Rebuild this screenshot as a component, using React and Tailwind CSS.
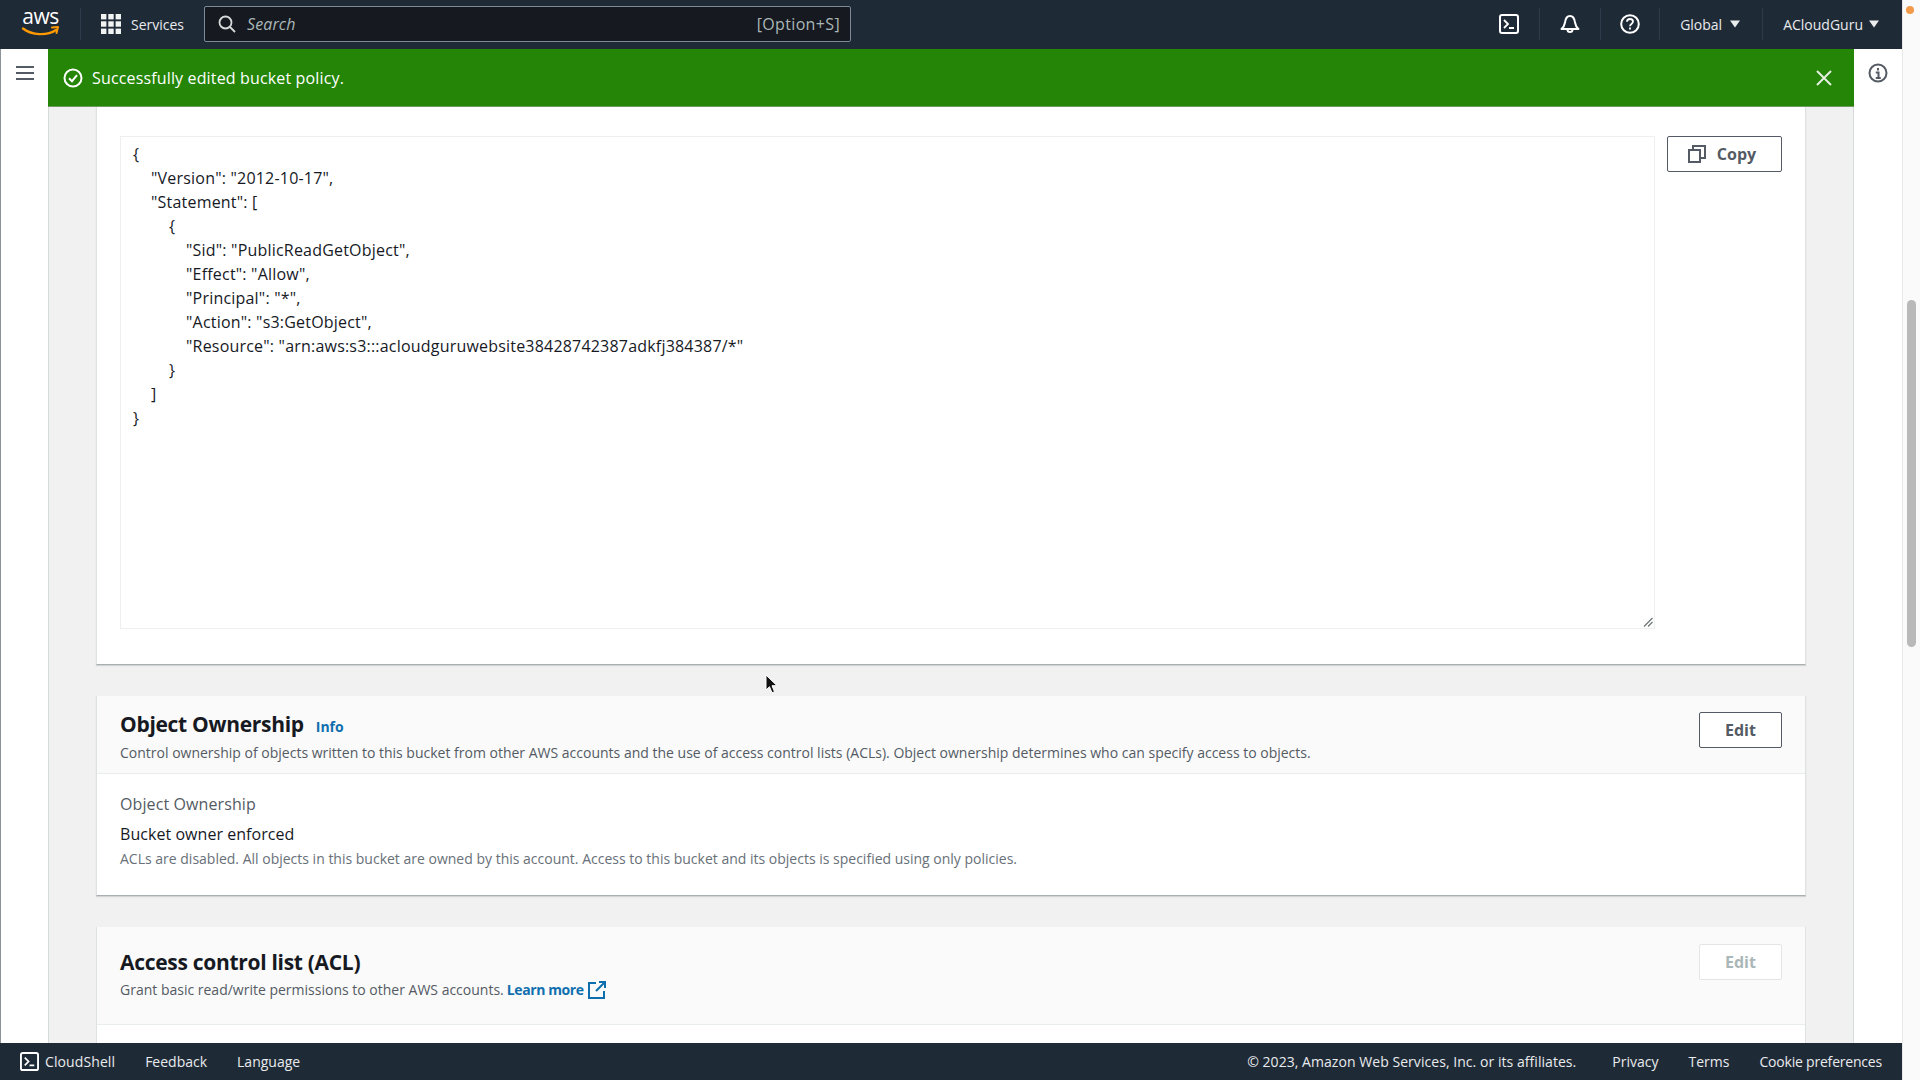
import React from "react";

const lines = [
  { t: "{", c: "pl-0" },
  { t: '"Version": "2012-10-17",', c: "pl-[18px]" },
  { t: '"Statement": [', c: "pl-[18px]" },
  { t: "{", c: "pl-[36px]" },
  { t: '"Sid": "PublicReadGetObject",', c: "pl-[53px]" },
  { t: '"Effect": "Allow",', c: "pl-[53px]" },
  { t: '"Principal": "*",', c: "pl-[53px]" },
  { t: '"Action": "s3:GetObject",', c: "pl-[53px]" },
  { t: '"Resource": "arn:aws:s3:::acloudguruwebsite38428742387adkfj384387/*"', c: "pl-[53px]" },
  { t: "}", c: "pl-[36px]" },
  { t: "]", c: "pl-[18px]" },
  { t: "}", c: "pl-0" },
];

const Sep = () => <div className="w-px h-8 bg-[#2f3b4a]" />;

const Caret = () => (
  <svg width="12" height="8" viewBox="0 0 12 8" className="shrink-0">
    <path d="M1 0.5h10L6 7.5z" fill="#e9ebed" />
  </svg>
);

const TerminalIcon = ({ size = 20, className = "" }) => (
  <svg width={size} height={size} viewBox="0 0 20 20" fill="none" stroke="currentColor" strokeWidth="2" className={className}>
    <rect x="1" y="1" width="18" height="18" rx="2" />
    <path d="M5 6l4 4-4 4M10 14h5" strokeWidth="1.8" />
  </svg>
);

export default function App() {
  return (
    <div className="flex h-screen w-screen overflow-hidden bg-white font-['Open_Sans','Noto_Sans',sans-serif] text-[#16191f]">
      <div className="flex flex-col flex-1 min-w-0">
        {/* top bar */}
        <header className="h-[49px] shrink-0 bg-[#1f2a37] flex items-center pb-px text-[#e9ebed] text-[14px]">
          <div className="w-[80px] shrink-0 h-full flex justify-center">
            <div className="relative w-[40px] h-[36px] mt-[5px] ml-[1px]">
              <div className="text-white text-[21px] leading-[22px] text-center tracking-[-0.5px]">aws</div>
              <svg width="40" height="12" viewBox="0 0 40 12" className="absolute left-0 top-[21px]" fill="none">
                <path d="M2 2.5c9 7 24 7.5 33 1.5" stroke="#ff9900" strokeWidth="2.4" strokeLinecap="round" />
                <path d="M31 1.5l6-.5-1.5 6" stroke="#ff9900" strokeWidth="2" strokeLinecap="round" strokeLinejoin="round" />
              </svg>
            </div>
          </div>
          <Sep />
          <svg width="20" height="20" viewBox="0 0 20 20" fill="#f2f3f3" className="ml-[20px] shrink-0">
            <rect x="0" y="0" width="5.4" height="5.4" />
            <rect x="7.3" y="0" width="5.4" height="5.4" />
            <rect x="14.6" y="0" width="5.4" height="5.4" />
            <rect x="0" y="7.3" width="5.4" height="5.4" />
            <rect x="7.3" y="7.3" width="5.4" height="5.4" />
            <rect x="14.6" y="7.3" width="5.4" height="5.4" />
            <rect x="0" y="14.6" width="5.4" height="5.4" />
            <rect x="7.3" y="14.6" width="5.4" height="5.4" />
            <rect x="14.6" y="14.6" width="5.4" height="5.4" />
          </svg>
          <span className="ml-[10px] w-[73px] shrink-0">Services</span>
          <div className="w-[647px] h-9 shrink-0 bg-[#16191f] border border-[#7d8998] rounded-[2px] flex items-center pl-[13px] pr-[10px] text-[16px] text-[#aab7b8]">
            <svg width="18" height="18" viewBox="0 0 18 18" fill="none" stroke="#d5dbdb" strokeWidth="1.8" className="shrink-0">
              <circle cx="7.5" cy="7.5" r="6" />
              <path d="M12 12l5 5" />
            </svg>
            <span className="ml-[11px] italic tracking-[0.1px]">Search</span>
            <span className="ml-auto tracking-[0.35px]">[Option+S]</span>
          </div>
          <div className="flex-1" />
          <TerminalIcon size={20} className="text-white shrink-0 mr-[20px]" />
          <Sep />
          <svg width="20" height="20" viewBox="0 0 20 20" fill="none" stroke="#fff" strokeWidth="2" strokeLinejoin="round" className="mx-[20px] shrink-0">
            <path d="M1.5 15c2.5-2 3-3.5 3.5-6.500C5.500 4.500 7 2 10 2s4.500 2.500 5 6.500c.5 3 1 4.500 3.500 6.500z" />
            <path d="M7.500 15.500a2.500 2.500 0 0 0 5 0" />
          </svg>
          <Sep />
          <svg width="20" height="20" viewBox="0 0 20 20" fill="none" stroke="#fff" strokeWidth="2" className="mx-[19px] shrink-0">
            <circle cx="10" cy="10" r="8.800" />
            <path d="M7 7.800c0-1.800 1.400-2.800 3-2.800s3 1 3 2.600c0 2.400-3 2.400-3 4.600" strokeWidth="1.800" />
            <path d="M10 13.600v1.800" strokeWidth="1.800" />
          </svg>
          <Sep />
          <span className="ml-[20px]">Global</span>
          <span className="ml-[7px] mr-[21px]"><Caret /></span>
          <Sep />
          <span className="ml-[20px]">ACloudGuru</span>
          <span className="ml-[5px] mr-[22px]"><Caret /></span>
        </header>

        {/* middle */}
        <div className="flex-1 flex min-h-0">
          <aside className="w-12 shrink-0 bg-white border-l border-[#8d9499] flex justify-center pt-[16px]">
            <svg width="18" height="16" viewBox="0 0 18 16" stroke="#545b64" strokeWidth="2">
              <path d="M0 2h18M0 8h18M0 14h18" />
            </svg>
          </aside>

          <main className="flex-1 min-w-0 flex flex-col bg-[#f0f1f0] relative border-l border-[#d5dbdb] border-r">
            <div className="h-[58px] shrink-0 -mx-px bg-[#248507] border-b border-[#6f9a63] flex items-center pl-[15px] pr-[22px] text-white text-[16px]">
              <svg width="20" height="20" viewBox="0 0 20 20" fill="none" stroke="#fff" strokeWidth="2" className="shrink-0">
                <circle cx="10" cy="10" r="8.500" />
                <path d="M6 10.200l3 3 5-6" />
              </svg>
              <span className="ml-[9px] tracking-[0.15px]">Successfully edited bucket policy.</span>
              <svg width="16" height="16" viewBox="0 0 16 16" stroke="#e4efe0" strokeWidth="2" className="ml-auto">
                <path d="M1 1l14 14M15 1L1 15" />
              </svg>
            </div>

            <div className="flex-1 min-h-0 overflow-hidden px-[47px] flex flex-col gap-[31px]">
              {/* policy card */}
              <section className="h-[558px] shrink-0 bg-white border-x border-[#dfe2e3] border-b border-b-[#a9aeb0] shadow-[0_1px_1px_rgba(0,0,0,0.12)] pt-[29px] pl-[23px] pr-[23px] flex items-start gap-[12px]">
                <div className="relative w-[1535px] h-[493px] shrink-0 border border-[#eef0f0] pt-[5px] pl-[12px] text-[16px] leading-[24px] tracking-[0.2px] text-[#16191f]">
                  {lines.map((l, i) => (
                    <div key={i} className={l.c}>{l.t}</div>
                  ))}
                  <svg width="10" height="10" viewBox="0 0 10 10" stroke="#6c7378" strokeWidth="1.200" className="absolute right-[1px] bottom-[1px]">
                    <path d="M1 9.500L9.500 1M5 9.500L9.500 5" />
                  </svg>
                </div>
                <button className="w-[115px] h-9 shrink-0 bg-white border border-[#545b64] rounded-[2px] flex items-center justify-center gap-[11px] pr-[5px] text-[#545b64] text-[16px] font-bold">
                  <svg width="18" height="18" viewBox="0 0 18 18" fill="none" stroke="#545b64" strokeWidth="2">
                    <rect x="1" y="5" width="11" height="12" />
                    <path d="M5 4V1h12v12h-4" />
                  </svg>
                  Copy
                </button>
              </section>

              {/* object ownership */}
              <section className="h-[200px] shrink-0 bg-white border-x border-[#dfe2e3] border-b border-b-[#a9aeb0] shadow-[0_1px_1px_rgba(0,0,0,0.12)]">
                <div className="h-[78px] bg-[#fafafa] border-b border-[#eaeded] pl-[23px] pr-[23px] flex">
                  <div className="flex-1 min-w-0 pt-[13px]">
                    <div className="flex items-baseline gap-[12px] h-[31px]">
                      <h2 className="text-[21px] leading-[31px] font-bold tracking-[-0.3px] text-[#16191f]">Object Ownership</h2>
                      <a className="text-[14px] font-bold text-[#0f6fae]">Info</a>
                    </div>
                    <p className="text-[14px] leading-[20px] mt-[3px] text-[#545b64]">
                      Control ownership of objects written to this bucket from other AWS accounts and the use of access control lists (ACLs). Object ownership determines who can specify access to objects.
                    </p>
                  </div>
                  <button className="mt-[16px] w-[83px] h-9 shrink-0 bg-white border border-[#545b64] rounded-[2px] text-[#545b64] text-[16px] font-bold">Edit</button>
                </div>
                <div className="pl-[23px] pt-[18px]">
                  <div className="text-[16px] leading-[24px] tracking-[0.1px] text-[#545b64]">Object Ownership</div>
                  <div className="text-[16px] leading-[24px] mt-[6px] tracking-[0.05px] text-[#16191f]">Bucket owner enforced</div>
                  <div className="text-[14px] leading-[20px] mt-[3px] text-[#687078]">
                    ACLs are disabled. All objects in this bucket are owned by this account. Access to this bucket and its objects is specified using only policies.
                  </div>
                </div>
              </section>

              {/* ACL */}
              <section className="h-[200px] shrink-0 bg-white border-x border-[#dfe2e3]">
                <div className="h-[98px] bg-[#fafafa] border-b border-[#eaeded] pl-[23px] pr-[23px] flex">
                  <div className="flex-1 min-w-0 pt-[20px]">
                    <h2 className="text-[21px] leading-[31px] font-bold tracking-[-0.3px] text-[#16191f]">Access control list (ACL)</h2>
                    <p className="text-[14px] leading-[20px] mt-[2px] text-[#545b64] flex items-center">
                      <span>Grant basic read/write permissions to other AWS accounts.</span>
                      <a className="ml-[3px] font-bold tracking-[-0.4px] text-[#0f6fae]">Learn more</a>
                      <svg width="18" height="18" viewBox="0 0 18 18" fill="none" stroke="#0f6fae" strokeWidth="2" className="ml-[4px]">
                        <path d="M8 2H1v15h15v-7M11 1h6v6M17 1L8 10" />
                      </svg>
                    </p>
                  </div>
                  <button className="mt-[17px] w-[83px] h-9 shrink-0 bg-white border border-[#e3e5e6] rounded-[2px] text-[#aab7b8] text-[16px] font-bold">Edit</button>
                </div>
              </section>
            </div>

            {/* mouse pointer */}
            <svg width="13" height="21" viewBox="0 0 13 21" className="absolute left-[716px] top-[625px]">
              <path d="M1 1v15l3.500-3.300 2.500 6 2.500-1-2.500-6H12z" fill="#111" stroke="#fff" strokeWidth="1" />
            </svg>
          </main>

          <aside className="w-12 shrink-0 bg-white flex justify-center pt-[14px]">
            <svg width="20" height="20" viewBox="0 0 20 20" fill="none" stroke="#545b64" strokeWidth="2">
              <circle cx="10" cy="10" r="8.500" />
              <path d="M10 5v2.500M7.800 9.500H10.500V15M7.800 15h5" />
            </svg>
          </aside>
        </div>

        {/* footer */}
        <footer className="h-[37px] shrink-0 bg-[#1f2a37] flex items-center text-[14px] text-[#e9ebed] pl-[20px] pr-[20px]">
          <TerminalIcon size={19} className="text-white shrink-0" />
          <span className="ml-[6px] tracking-[0.1px]">CloudShell</span>
          <span className="ml-[30px]">Feedback</span>
          <span className="ml-[30px]">Language</span>
          <span className="ml-auto tracking-[0.05px]">© 2023, Amazon Web Services, Inc. or its affiliates.</span>
          <span className="ml-[36px]">Privacy</span>
          <span className="ml-[30px]">Terms</span>
          <span className="ml-[30px] tracking-[-0.2px]">Cookie preferences</span>
        </footer>
      </div>

      {/* window scrollbar */}
      <div className="w-[18px] shrink-0 bg-[#fafafa] border-l border-[#e8e8e8] relative">
        <div className="absolute left-[3px] top-[6px] w-2 h-2 rounded-full bg-[#f29a4a]" />
        <div className="mt-[300px] ml-[4px] w-[9px] h-[347px] rounded-[5px] bg-[#b9b9b9]" />
      </div>
    </div>
  );
}
